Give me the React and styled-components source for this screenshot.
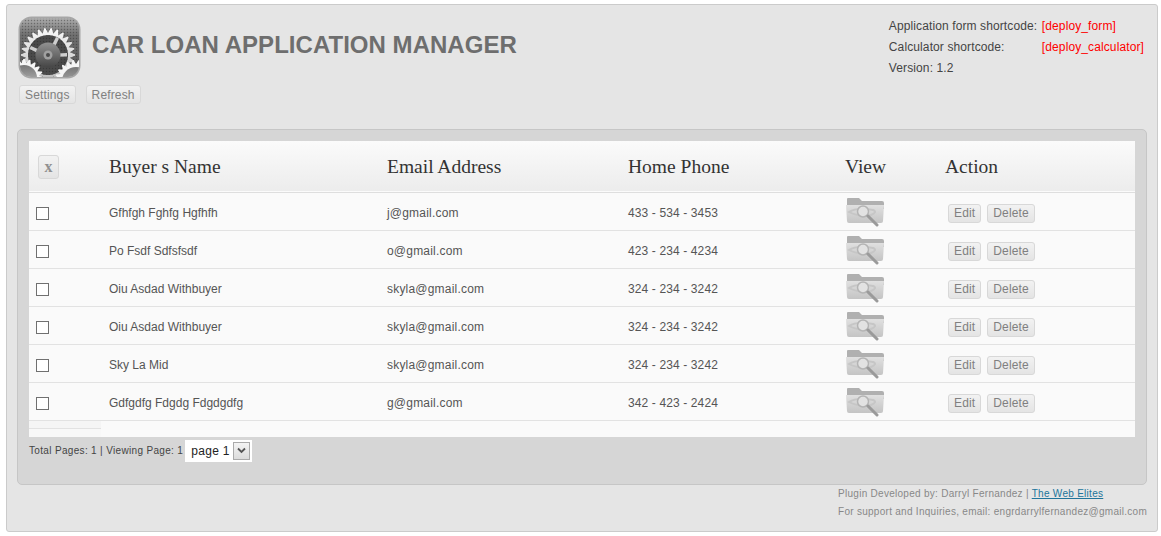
import React from "react";
import styled, { createGlobalStyle } from "styled-components";

const Global = createGlobalStyle`
  html, body { margin: 0; padding: 0; background: #fff; }
  body { font-family: "Liberation Sans", Arial, sans-serif; font-size: 12px; color: #555; }
`;

const Page = styled.div`
  box-sizing: border-box;
  width: 1152px;
  height: 528px;
  margin: 4px 0 0 6px;
  padding: 11px 10px 0 10px;
  background: #e5e5e5;
  border: 1px solid #cbcbcb;
  border-radius: 3px;
`;
const Header = styled.header`
  display: flex;
  justify-content: space-between;
  height: 113px;
`;
const Brand = styled.div`
  display: flex;
  flex-direction: column;
  align-items: flex-start;
  padding-left: 1px;
`;
const BrandTop = styled.div`
  display: flex;
  align-items: center;
  gap: 11px;
  height: 63px;
`;
const Title = styled.h1`
  margin: 0 0 5px;
  font-size: 24px;
  line-height: 30px;
  font-weight: 700;
  letter-spacing: 0.03px;
  color: #6e6e6e;
`;
const BrandActions = styled.div`
  display: flex;
  gap: 10px;
  margin: 6px 0 0 1px;
`;
const Info = styled.div`
  display: grid;
  grid-template-columns: 153px auto;
  grid-auto-rows: 21px;
  align-items: center;
  align-content: start;
  padding: 0 3px 0 0;
  margin-top: -1px;
  color: #444;
  font-size: 12px;
  letter-spacing: 0.11px;
`;
const Code = styled.span`
  color: #f00;
`;
const SoftButton = styled.button`
  box-sizing: border-box;
  display: inline-flex;
  align-items: center;
  justify-content: center;
  height: 19px;
  padding: 0 5px;
  border: 1px solid #d8d8d8;
  border-radius: 3px;
  background: linear-gradient(#f2f2f2, #e4e4e4);
  color: #808080;
  font: 12px "Liberation Sans", Arial, sans-serif;
  letter-spacing: 0.15px;
`;
const Panel = styled.section`
  box-sizing: border-box;
  width: 1130px;
  height: 356px;
  padding: 11px 11px 0 11px;
  background: #d6d6d6;
  border: 1px solid #c6c6c6;
  border-radius: 5px;
`;
const Table = styled.table`
  width: 1106px;
  table-layout: fixed;
  border-collapse: collapse;
  background: #fafafa;
`;
const HeadRow = styled.tr`
  height: 51px;
  background: linear-gradient(#fbfbfb, #ececec);
  border-bottom: 1px solid #dedede;
`;
const HeadCell = styled.th`
  padding: 2px 0 0 8px;
  text-align: left;
  font: 400 19.5px "Liberation Serif", "Times New Roman", serif;
  color: #333;
`;
const ClearButton = styled(SoftButton)`
  width: 21px;
  height: 24px;
  margin: 0 0 0 1px;
  padding: 0;
  font: 700 16px "Liberation Serif", serif;
  color: #909090;
`;
const Row = styled.tr`
  height: 38px;
  border-bottom: 1px solid #e2e2e2;
`;
const Cell = styled.td`
  padding: 4px 0 0 8px;
  font-size: 12px;
  letter-spacing: ${(p) => p.$spacing || 0}px;
  color: #555;
`;
const Check = styled.span`
  display: block;
  box-sizing: border-box;
  width: 13px;
  height: 13px;
  margin: 1px 0 0 -1px;
  background: #fff;
  border: 1px solid #707070;
`;
const Actions = styled.div`
  display: flex;
  gap: 6px;
  margin: 0 0 0 3px;
`;
const FolderWrap = styled.div`
  margin-top: -2px;
`;
const FootCell = styled.td`
  height: 16px;
  padding: 0;
`;
const Strip = styled.div`
  box-sizing: border-box;
  width: 72px;
  height: 16px;
  background: linear-gradient(#f5f5f5 0 7px, #e2e2e2 7px 8px, #f8f8f8 8px);
`;
const Pager = styled.div`
  display: flex;
  align-items: center;
  gap: 2px;
  margin-top: 3px;
  font-size: 10px;
  letter-spacing: 0.33px;
  color: #444;
`;
const PageSelect = styled.div`
  box-sizing: border-box;
  display: flex;
  align-items: center;
  justify-content: space-between;
  width: 67px;
  height: 22px;
  padding: 0 2px 0 6px;
  background: #fff;
  font-size: 12px;
  color: #222;
`;
const SelectArrow = styled.span`
  box-sizing: border-box;
  display: flex;
  align-items: center;
  justify-content: center;
  width: 17px;
  height: 18px;
  border: 1px solid #aaa;
  background: linear-gradient(#f4f4f4, #dcdcdc);
`;
const Footer = styled.footer`
  display: flex;
  flex-direction: column;
  align-items: flex-start;
  margin: 0 0 0 821px;
  font-size: 10px;
  line-height: 18px;
  letter-spacing: 0.28px;
  color: #888;
  white-space: nowrap;
`;
const Link = styled.a`
  color: #21759b;
  text-decoration: underline;
`;

const gearPath = (cx, cy, R, r, teeth) => {
  let d = "";
  const step = (Math.PI * 2) / teeth;
  for (let i = 0; i < teeth; i++) {
    const a = i * step;
    const pts = [
      [r, a - step * 0.5],
      [R, a - step * 0.1],
      [R, a + step * 0.1],
    ];
    pts.forEach(([rad, an], j) => {
      const x = (cx + rad * Math.cos(an)).toFixed(2);
      const y = (cy + rad * Math.sin(an)).toFixed(2);
      d += `${i === 0 && j === 0 ? "M" : "L"}${x} ${y} `;
    });
  }
  return d + "Z";
};

const SettingsLogo = () => (
  <svg width="63" height="63" viewBox="0 0 63 63">
    <defs>
      <linearGradient id="lgBg" x1="0" y1="0" x2="0" y2="1">
        <stop offset="0" stopColor="#b4b4b4" />
        <stop offset="0.3" stopColor="#707070" />
        <stop offset="1" stopColor="#505050" />
      </linearGradient>
      <linearGradient id="lgGear" x1="0" y1="0" x2="0" y2="1">
        <stop offset="0" stopColor="#fafafa" />
        <stop offset="1" stopColor="#b8b8b8" />
      </linearGradient>
      <linearGradient id="lgHub" x1="0" y1="0" x2="0" y2="1">
        <stop offset="0" stopColor="#929292" />
        <stop offset="1" stopColor="#454545" />
      </linearGradient>
      <linearGradient id="lgBottom" x1="0" y1="0" x2="0" y2="1">
        <stop offset="0" stopColor="#777" />
        <stop offset="1" stopColor="#c8c8c8" />
      </linearGradient>
      <pattern id="lgDots" width="3" height="3" patternUnits="userSpaceOnUse">
        <circle cx="1.5" cy="1.5" r="0.75" fill="#222" opacity="0.4" />
      </pattern>
      <clipPath id="lgClip">
        <rect x="2" y="2" width="59" height="59" rx="11" />
      </clipPath>
    </defs>
    <rect x="0.5" y="0.5" width="62" height="62" rx="13" fill="#a6a6a6" />
    <g clipPath="url(#lgClip)">
      <rect width="63" height="63" fill="url(#lgBg)" />
      <rect width="63" height="63" fill="url(#lgDots)" />
      <path d={gearPath(30, 39, 27, 22, 26)} fill="url(#lgGear)" />
      <circle cx="30" cy="39" r="20" fill="#4a4a4a" />
      <circle cx="30" cy="39" r="20" fill="url(#lgDots)" />
      <path d="M29 39 L38 21 L41 22.5 L32 41Z M29 38 L49 37 V40.5 L30 41Z M29 37 L13 30 L11.5 33 L28 41Z" fill="#cfcfcf" />
      <circle cx="30" cy="39" r="12.5" fill="url(#lgHub)" />
      <circle cx="30" cy="39" r="4.5" fill="#a0a0a0" />
      <circle cx="30" cy="39" r="2" fill="#4a4a4a" />
      <path d={gearPath(6, 62, 19, 15, 20)} fill="#f5f5f5" />
      <circle cx="6" cy="62" r="13" fill="url(#lgBottom)" />
      <path d={gearPath(58, 65, 21, 17, 22)} fill="#f5f5f5" />
      <circle cx="58" cy="65" r="14" fill="url(#lgBottom)" />
    </g>
  </svg>
);

const FolderIcon = () => (
  <svg width="40" height="30" viewBox="0 0 40 30" style={{ display: "block", filter: "blur(0.7px)" }}>
    <defs>
      <linearGradient id="fdBody" x1="0" y1="0" x2="0" y2="1">
        <stop offset="0" stopColor="#e0e0e0" />
        <stop offset="1" stopColor="#c4c4c4" />
      </linearGradient>
    </defs>
    <path d="M3 1 H14 L17 4 H37 Q39 4 39 6 V12 H2 V2 Q2 1 3 1Z" fill="#b0b0b0" />
    <path d="M1 8 H39 L38 24 Q38 26 36 26 H4 Q2 26 2 24Z" fill="url(#fdBody)" />
    <path d="M4 15 Q12 10 28 13 Q33 15 26 18 Q13 20 4 15Z" fill="none" stroke="#c6c6c6" strokeWidth="2" />
    <circle cx="18" cy="14.5" r="5.5" fill="#e2e2e2" stroke="#b4b4b4" strokeWidth="1.5" />
    <path d="M23 19 L32 28" stroke="#9a9a9a" strokeWidth="3" strokeLinecap="round" />
  </svg>
);

const Chevron = () => (
  <svg width="9" height="7" viewBox="0 0 9 7">
    <path d="M1 1.5 L4.5 5 L8 1.5" fill="none" stroke="#555" strokeWidth="1.8" />
  </svg>
);

const rows = [
  ["Gfhfgh Fghfg Hgfhfh", "j@gmail.com", "433 - 534 - 3453"],
  ["Po Fsdf Sdfsfsdf", "o@gmail.com", "423 - 234 - 4234"],
  ["Oiu Asdad Withbuyer", "skyla@gmail.com", "324 - 234 - 3242"],
  ["Oiu Asdad Withbuyer", "skyla@gmail.com", "324 - 234 - 3242"],
  ["Sky La Mid", "skyla@gmail.com", "324 - 234 - 3242"],
  ["Gdfgdfg Fdgdg Fdgdgdfg", "g@gmail.com", "342 - 423 - 2424"],
];

export default function App() {
  return (
    <>
      <Global />
      <Page>
        <Header>
          <Brand>
            <BrandTop>
              <SettingsLogo />
              <Title>CAR LOAN APPLICATION MANAGER</Title>
            </BrandTop>
            <BrandActions>
              <SoftButton>Settings</SoftButton>
              <SoftButton>Refresh</SoftButton>
            </BrandActions>
          </Brand>
          <Info>
            <span>Application form shortcode:</span>
            <Code>[deploy_form]</Code>
            <span>Calculator shortcode:</span>
            <Code>[deploy_calculator]</Code>
            <span>Version: 1.2</span>
          </Info>
        </Header>
        <Panel>
          <Table>
            <colgroup>
              <col width="72" />
              <col width="278" />
              <col width="241" />
              <col width="217" />
              <col width="100" />
              <col width="198" />
            </colgroup>
            <thead>
              <HeadRow>
                <HeadCell><ClearButton>x</ClearButton></HeadCell>
                <HeadCell>Buyer s Name</HeadCell>
                <HeadCell>Email Address</HeadCell>
                <HeadCell>Home Phone</HeadCell>
                <HeadCell>View</HeadCell>
                <HeadCell>Action</HeadCell>
              </HeadRow>
            </thead>
            <tbody>
              {rows.map((r, i) => (
                <Row key={i}>
                  <Cell><Check /></Cell>
                  <Cell>{r[0]}</Cell>
                  <Cell $spacing={0.2}>{r[1]}</Cell>
                  <Cell $spacing={0.12}>{r[2]}</Cell>
                  <Cell><FolderWrap><FolderIcon /></FolderWrap></Cell>
                  <Cell>
                    <Actions>
                      <SoftButton>Edit</SoftButton>
                      <SoftButton>Delete</SoftButton>
                    </Actions>
                  </Cell>
                </Row>
              ))}
              <tr>
                <FootCell><Strip /></FootCell>
                <FootCell colSpan="5" />
              </tr>
            </tbody>
          </Table>
          <Pager>
            <span>Total Pages: 1 | Viewing Page: 1</span>
            <PageSelect>
              page 1
              <SelectArrow><Chevron /></SelectArrow>
            </PageSelect>
          </Pager>
        </Panel>
        <Footer>
          <span>Plugin Developed by: Darryl Fernandez | <Link href="#">The Web Elites</Link></span>
          <span>For support and Inquiries, email: engrdarrylfernandez@gmail.com</span>
        </Footer>
      </Page>
    </>
  );
}
